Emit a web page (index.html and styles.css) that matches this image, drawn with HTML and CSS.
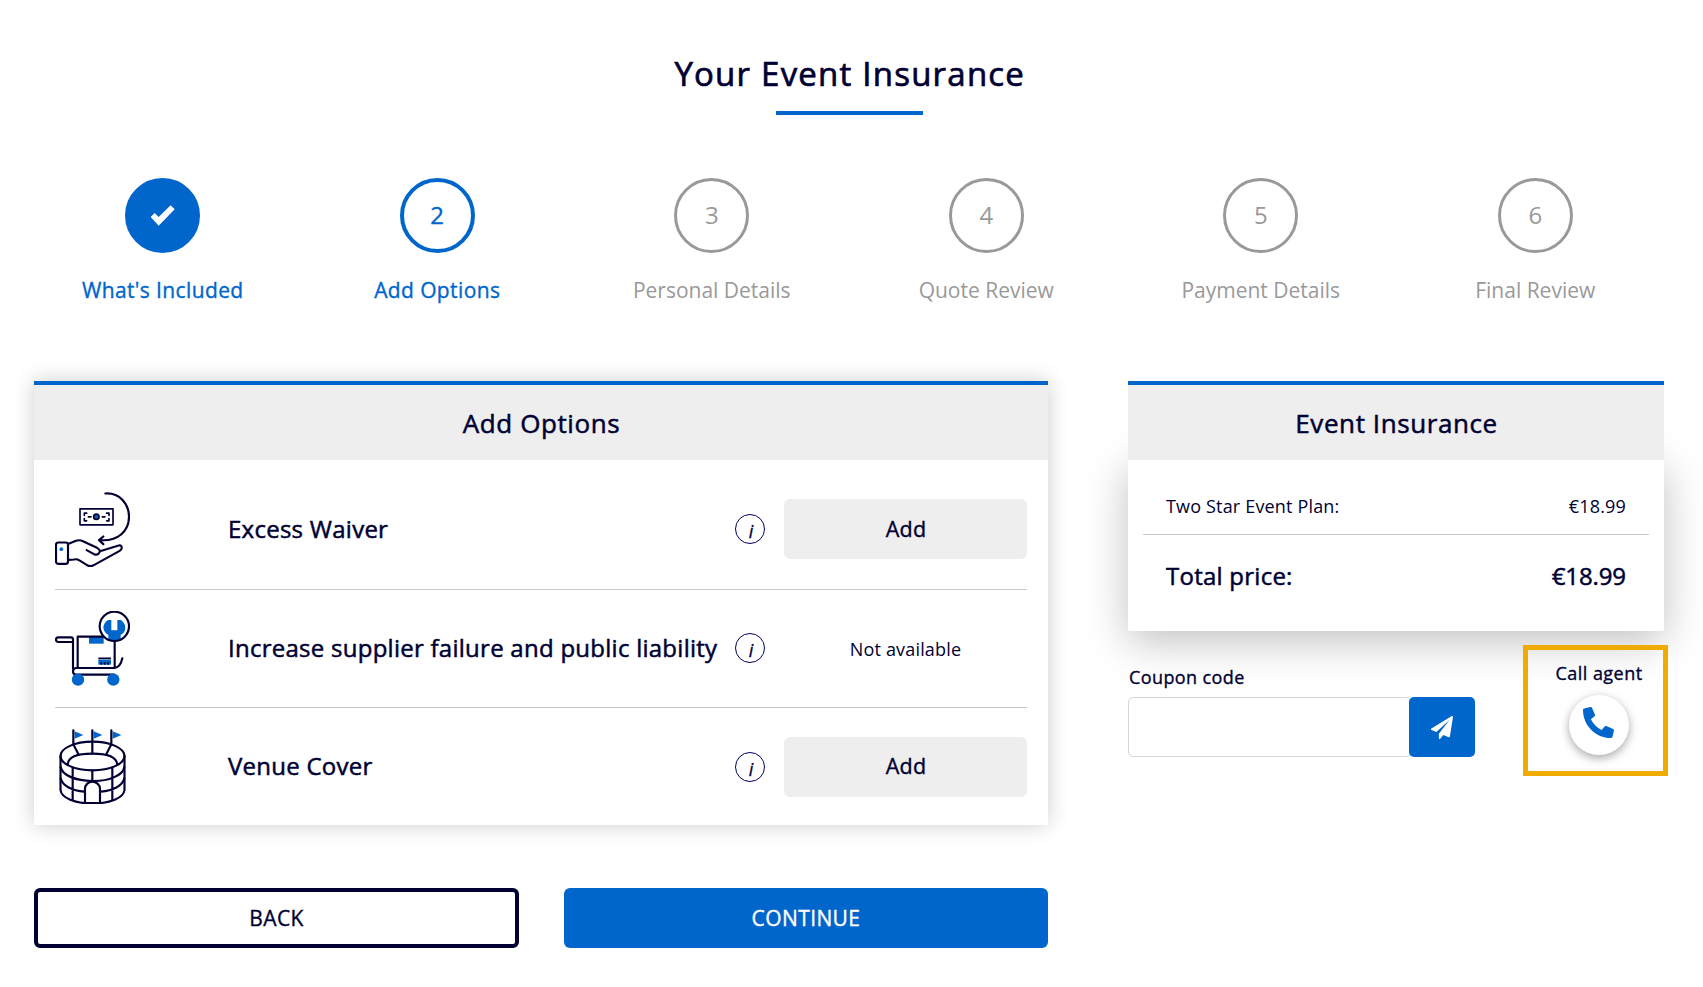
FILE: index.html
```html
<!DOCTYPE html>
<html lang="en">
<head>
<meta charset="utf-8">
<title>Your Event Insurance</title>
<link rel="stylesheet" href="styles.css">
</head>
<body>
<h1 class="title"><span>Your Event Insurance</span></h1>
<ol class="steps">
  <li class="step done"><span class="dot"><svg width="25" height="21" viewBox="0 0 75 63"><path d="M2 36 14 24 26 36 62 1 74 13 26 62Z" fill="#fff"/></svg></span><span class="name">What's Included</span></li>
  <li class="step active"><span class="dot">2</span><span class="name">Add Options</span></li>
  <li class="step"><span class="dot">3</span><span class="name">Personal Details</span></li>
  <li class="step"><span class="dot">4</span><span class="name">Quote Review</span></li>
  <li class="step"><span class="dot">5</span><span class="name">Payment Details</span></li>
  <li class="step"><span class="dot">6</span><span class="name">Final Review</span></li>
</ol>
<div class="columns">
  <main class="main">
    <section class="card">
      <h2 class="card-head">Add Options</h2>
      <div class="options">
        <div class="option">
          <svg class="pic" viewBox="45 64.500 225 225">
            <g class="ink">
              <path d="M196 69C237 66 267 98 267 139C267 181 235 213 180 209M190 198 177 209 190 221"/>
              <rect x="120" y="115" width="99" height="48" stroke-width="5"/>
              <path stroke-width="5" d="M140 128H133V135M133 144V151H140M200 128H207V135M207 144V151H200M145 139H153M187 139H195"/>
              <rect x="48" y="216" width="36" height="64" rx="7"/>
              <path d="M86 220 108 211Q118 207 129 212L171 232Q184 239 177 248Q172 255 162 251L140 239M180 242 236 225Q246 223 245 233Q245 238 239 241L163 283Q150 291 140 283L117 269Q111 265 102 267L86 268"/>
            </g>
            <circle cx="169" cy="139" r="8" fill="#0066cc" stroke="#000033" stroke-width="5"/>
            <circle cx="64" cy="236" r="5.500" fill="#0066cc"/>
          </svg>
          <span class="option-name">Excess Waiver</span>
          <span class="info">i</span>
          <button class="add">Add</button>
        </div>
        <div class="option">
          <svg class="pic" viewBox="45 45 225 225">
            <path d="M147 123H191V143H147Z" fill="#0066cc"/>
            <path d="M175 191H213V206H175Z" fill="#0066cc"/>
            <g class="ink">
              <path d="M113 215V122H224V215"/>
              <path d="M99 138H56Q48 138 48 131Q48 124 56 124H93Q99 124 99 131V218M247 187C243 206 236 216 222 216H108Q99 217 99 226Q99 236 108 236H222"/>
              <path d="M175 187H213M184 199V206M194 199V206M204 199V206" stroke-width="5" stroke-linecap="butt"/>
            </g>
            <circle cx="223" cy="91" r="44" fill="#fff"/>
            <path d="M204 72H214V103H232V72H243Q259 84 255 103Q252 113 242 117V130Q223 139 205 130V117Q191 109 190 94Q191 81 204 72Z" fill="#0066cc"/>
            <circle cx="223" cy="91" r="44" class="ink"/>
            <circle cx="114" cy="251" r="18.500" fill="#0066cc"/>
            <circle cx="220" cy="251" r="18.500" fill="#0066cc"/>
          </svg>
          <span class="option-name">Increase supplier failure and public liability</span>
          <span class="info">i</span>
          <span class="none">Not available</span>
        </div>
        <div class="option">
          <svg class="pic" viewBox="45 40 225 225">
            <path d="M104 47 130 58 104 69ZM161 47 187 58 161 69ZM218 47 244 58 218 69Z" fill="#0066cc"/>
            <g class="ink">
              <path d="M100 44V86L116 117M157 44V114M214 44V86L198 117"/>
              <ellipse cx="157.500" cy="121" rx="96" ry="43"/>
              <path d="M83 147C84 124 114 114 157 114S230 124 232 147"/>
              <path d="M61.500 121V223C64 247 105 263 157 264C210 263 251 247 253.500 223V121"/>
              <path d="M62 154C66 180 109 195 157 196S249 180 253 154M62 188C67 211 97 225 133 228M253 188C248 211 218 225 182 228M157 165V195M98 157V253M217 157V253"/>
              <path d="M135 262V220C135 206 146 198 157 198S180 206 180 220V262Z" fill="#fff"/>
            </g>
          </svg>
          <span class="option-name">Venue Cover</span>
          <span class="info">i</span>
          <button class="add">Add</button>
        </div>
      </div>
    </section>
    <div class="actions">
      <button class="back">BACK</button>
      <button class="continue">CONTINUE</button>
    </div>
  </main>
  <aside class="side">
    <h2 class="card-head">Event Insurance</h2>
    <div class="summary">
      <div class="line"><span>Two Star Event Plan:</span><span>€18.99</span></div>
      <div class="total"><span>Total price:</span><span class="sum">€18.99</span></div>
    </div>
    <div class="extras">
      <div class="coupon">
        <label class="coupon-label" for="coupon">Coupon code</label>
        <div class="coupon-row">
          <input class="coupon-input" id="coupon" type="text">
          <button class="send" aria-label="Apply"><svg width="22" height="23" viewBox="0 0 1792 1792" preserveAspectRatio="none"><path fill="#fff" d="M1764 11q33 24 27 64l-256 1536q-5 29-32 45-14 8-31 8-11 0-24-5l-453-185-242 295q-18 23-49 23-13 0-22-4-19-7-30.500-23.500t-11.500-36.500v-349l864-1059-1069 925-395-162q-37-14-40-55-2-40 32-59l1664-960q15-9 32-9 20 0 36 11z"/></svg></button>
        </div>
      </div>
      <div class="agent">
        <span class="agent-label">Call agent</span>
        <span class="phone"><svg width="31" height="31" viewBox="0 0 512 512"><path transform="matrix(-1 0 0 1 512 0)" fill="#0066cc" d="M493.400 24.600l-104-24c-11.300-2.600-22.900 3.300-27.500 13.900l-48 112c-4.200 9.800-1.400 21.300 6.900 28l60.600 49.600c-36 76.700-98.900 140.500-177.200 177.200l-49.600-60.600c-6.800-8.300-18.200-11.100-28-6.900l-112 48C3.900 366.500-2 378.100.6 389.400l24 104C27.100 504.200 36.700 512 48 512c256.100 0 464-207.500 464-464 0-11.200-7.700-20.900-18.600-23.400z"/></svg></span>
      </div>
    </div>
  </aside>
</div>
</body>
</html>
```
FILE: styles.css
```css
* { box-sizing: border-box; }
body {
  margin: 0;
  height: 987px;
  overflow: hidden;
  background: #fff;
  color: #000033;
  font: 400 18px/1.36 "Open Sans", sans-serif;
}
button { font: inherit; color: inherit; border: 0; padding: 0; }
/* medium weight, between regular and semibold */
.title, .done .name, .active .name, .active .dot, .card-head, .option-name,
.add, .back, .continue, .total, .coupon-label, .agent-label {
  -webkit-text-stroke: 0.35px currentColor;
}
.title {
  margin: 0;
  padding: 50px 5px 0 0;
  text-align: center;
  font-size: 33px;
  line-height: 48px;
  font-weight: 400;
  letter-spacing: 1.22px;
  -webkit-text-stroke-width: 0.7px;
}
.title span { padding-left: 1.5px; }
.title::after {
  content: "";
  display: block;
  width: 147px;
  height: 4px;
  margin: 13px auto 0;
  background: #0066cc;
}
.steps {
  display: grid;
  grid-template-columns: repeat(6, 274.5px);
  margin: 63px 0 0 25.5px;
  padding: 0;
  list-style: none;
}
.step {
  display: flex;
  flex-direction: column;
  align-items: center;
  color: #999;
}
.dot {
  display: flex;
  align-items: center;
  justify-content: center;
  width: 75px;
  height: 75px;
  border: 3px solid #999;
  border-radius: 50%;
  font-size: 24px;
}
.name { margin-top: 23px; font-size: 21px; line-height: 29px; }
.done, .active { color: #0066cc; letter-spacing: 0.38px; }
.done .dot { border-color: #0066cc; background: #0066cc; }
.active .dot { border: 4px solid #0066cc; }
.columns { display: flex; gap: 80px; margin: 76px 0 0 34px; }
.main { width: 1014px; }
.side { width: 536px; }
.card { box-shadow: 0 0 20px rgba(0, 0, 0, 0.2); }
.card-head {
  position: relative;
  z-index: 1;
  margin: 0;
  height: 79px;
  border-top: 4px solid #0066cc;
  background: #eee;
  text-align: center;
  font-size: 26px;
  line-height: 77px;
  font-weight: 400;
  letter-spacing: 0.58px;
  text-indent: 1px;
  -webkit-text-stroke-width: 0.5px;
}
.options { height: 365px; padding: 10px 21px 0; }
.option {
  display: grid;
  grid-template-columns: 173px 1fr 49px 243px;
  align-items: center;
  height: 118.5px;
}
.option + .option { border-top: 1px solid #c9c9c9; }
.pic { width: 75px; height: 75px; }
.ink {
  fill: none;
  stroke: #000033;
  stroke-width: 6.5;
  stroke-linecap: round;
  stroke-linejoin: round;
}
.option-name {
  font-size: 24px;
  letter-spacing: 0.26px;
  white-space: nowrap;
  -webkit-text-stroke-width: 0.5px;
}
.info {
  width: 30px;
  height: 30px;
  border: 1px solid #000066;
  border-radius: 50%;
  padding: 3px 0 0 2px;
  text-align: center;
  font-size: 18px;
  line-height: 27px;
  font-style: italic;
  -webkit-text-stroke: 0.3px currentColor;
}
.add { height: 60px; padding: 0 0 2px 1px; border-radius: 6px; background: #eee; font-size: 21.5px; letter-spacing: 0.25px; }
.none { padding-top: 1px; text-align: center; letter-spacing: 0.17px; }
.actions { display: flex; justify-content: space-between; margin-top: 63px; }
.back, .continue { width: 485px; height: 60px; border-radius: 6px; font-size: 21px; letter-spacing: 0.4px; }
.back { border: 4px solid #000033; background: #fff; }
.continue { width: 484px; background: #0066cc; color: #fff; }
.summary { height: 171px; padding: 0 15px; box-shadow: 0 10px 40px rgba(0, 0, 0, 0.25); }
.line, .total { display: flex; justify-content: space-between; padding: 0 23px; }
.line { height: 75px; border-bottom: 1px solid #c9c9c9; line-height: 92px; letter-spacing: 0.17px; }
.total { font-size: 24px; line-height: 81px; letter-spacing: 0.25px; -webkit-text-stroke-width: 0.5px; }
.sum { letter-spacing: -0.1px; }
.extras { display: flex; justify-content: space-between; width: 540px; padding-top: 14px; }
.coupon { width: 347px; padding-top: 19px; }
.coupon-label { display: block; height: 33px; padding-left: 1px; line-height: 26px; letter-spacing: 0.4px; }
.coupon-row { display: flex; }
.coupon-input {
  width: 283px;
  height: 60px;
  margin-right: -2px;
  border: 1px solid #d5d5dc;
  border-radius: 5px;
  background: #fff;
}
.send {
  display: flex;
  align-items: center;
  justify-content: center;
  width: 66px;
  height: 60px;
  border-radius: 5px;
  background: #0066cc;
}
.agent {
  display: flex;
  flex-direction: column;
  align-items: center;
  width: 145px;
  height: 131px;
  padding-left: 7px;
  border: 5px solid #f0ab00;
}
.agent-label { height: 45px; line-height: 46px; letter-spacing: 0.48px; }
.phone {
  display: flex;
  justify-content: center;
  width: 60px;
  height: 60px;
  padding: 12px 1px 0 0;
  border-radius: 50%;
  background: #fff;
  box-shadow: 0 3px 10px rgba(0, 0, 0, 0.35);
}
```
